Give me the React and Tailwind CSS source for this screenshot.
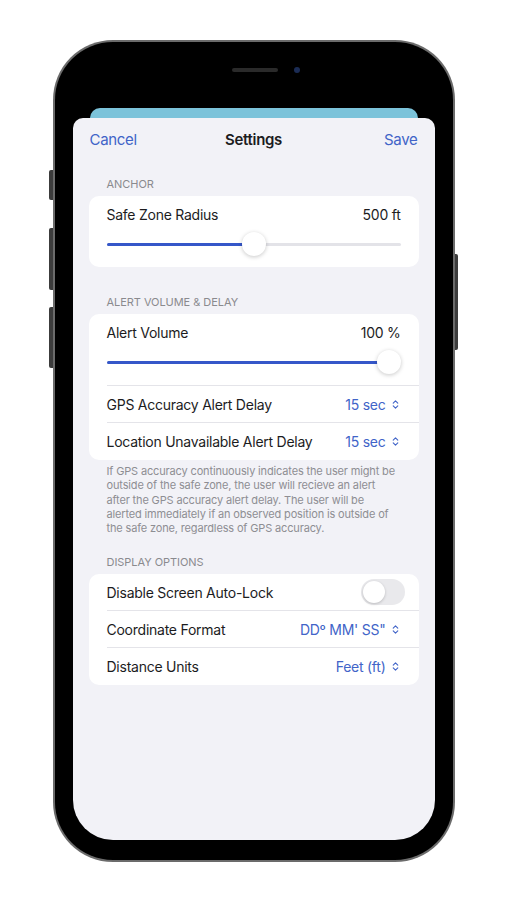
import { ChevronsUpDown } from "lucide-react";

const font = { fontFamily: "Inter, 'Noto Sans', 'Liberation Sans', sans-serif" };

const Header = ({ children, top }) => (
  <div className={`px-[34px] ${top} pb-[5px] text-[11px] leading-[13px] text-[#8a8a8e] uppercase tracking-[-0.05px]`}>
    {children}
  </div>
);

const Slider = ({ value }) => (
  <div className="relative h-[24px] mx-[18px] flex items-center">
    <div className="w-full h-[3px] rounded-full bg-[#e3e3e8] overflow-hidden">
      <div className="h-full bg-[#3557c9]" style={{ width: `calc(12px + (100% - 24px) * ${value})` }} />
    </div>
    <div
      className="absolute top-0 w-[24px] h-[24px] rounded-full bg-white shadow-[0_1px_4px_rgba(0,0,0,0.22)]"
      style={{ left: `calc((100% - 24px) * ${value})` }}
    />
  </div>
);

const PickerRow = ({ label, value, last }) => (
  <div className="ml-[18px] flex items-center">
    <div className={`flex-1 h-[37px] flex items-center justify-between pr-[18px] ${last ? "" : "border-b border-[#e4e4e9]"}`}>
      <span className="text-[14px] tracking-[-0.25px] text-[#1c1c1e]">{label}</span>
      <span className="flex items-center gap-[4px] text-[14px] tracking-[-0.25px] text-[#4164c8]">
        {value}
        <ChevronsUpDown size={11} strokeWidth={2.4} />
      </span>
    </div>
  </div>
);

export default function App() {
  return (
    <div className="w-[507px] h-[900px] bg-white pt-[40px] flex justify-center" style={font}>
      <div className="relative w-[402px] h-[822px]">
        {/* side buttons */}
        <div className="absolute left-[-4px] top-[130px] w-[4px] h-[30px] rounded-l-[2px] bg-[#3c3c3c]" />
        <div className="absolute left-[-4px] top-[188px] w-[4px] h-[62px] rounded-l-[2px] bg-[#3c3c3c]" />
        <div className="absolute left-[-4px] top-[267px] w-[4px] h-[61px] rounded-l-[2px] bg-[#3c3c3c]" />
        <div className="absolute right-[-3px] top-[214px] w-[3px] h-[96px] rounded-r-[2px] bg-[#3c3c3c]" />

        <div className="w-full h-full rounded-[60px] bg-[#6b6b6b] p-[2px]">
          <div className="relative w-full h-full rounded-[58px] bg-black p-[18px] pb-[20px]">
            {/* speaker + camera */}
            <div className="absolute top-[26px] left-[177px] w-[46px] h-[4px] rounded-full bg-[#2a2a2a]" />
            <div className="absolute top-[25px] left-[239px] w-[6px] h-[6px] rounded-full bg-[#1b2c55]" />

            <div className="w-full h-full rounded-[40px] bg-black overflow-hidden flex flex-col pt-[48px]">
              <div className="mx-[17px] h-[10px] rounded-t-[10px] bg-[#7cc3da]" />
              <div className="flex-1 bg-[#f2f2f7] rounded-t-[10px]">
                {/* nav */}
                <div className="h-[44px] px-[17px] flex items-center justify-between text-[15px] tracking-[-0.3px]">
                  <span className="text-[#4164c8] w-[60px]">Cancel</span>
                  <span className="font-semibold text-[#1c1c1e]">Settings</span>
                  <span className="text-[#4164c8] w-[60px] text-right">Save</span>
                </div>

                <Header top="pt-[16px]">Anchor</Header>
                <div className="mx-[16px] bg-white rounded-[10px] pb-[11px]">
                  <div className="h-[36px] px-[18px] flex items-center justify-between text-[14px] tracking-[-0.25px] text-[#1c1c1e]">
                    <span>Safe Zone Radius</span>
                    <span>500 ft</span>
                  </div>
                  <Slider value={0.5} />
                </div>

                <Header top="pt-[29px]">Alert Volume &amp; Delay</Header>
                <div className="mx-[16px] bg-white rounded-[10px]">
                  <div className="ml-[18px] border-b border-[#e4e4e9] pb-[11px]">
                    <div className="h-[36px] pr-[18px] flex items-center justify-between text-[14px] tracking-[-0.25px] text-[#1c1c1e]">
                      <span>Alert Volume</span>
                      <span>100 %</span>
                    </div>
                    <div className="-ml-[18px]">
                      <Slider value={1} />
                    </div>
                  </div>
                  <PickerRow label="GPS Accuracy Alert Delay" value="15 sec" />
                  <PickerRow label="Location Unavailable Alert Delay" value="15 sec" last />
                </div>
                <p className="px-[34px] pt-[4px] text-[11px] leading-[14.3px] tracking-[-0.15px] text-[#8e8e93]">
                  If GPS accuracy continuously indicates the user might be outside of the safe zone, the user will recieve an alert after the GPS accuracy alert delay. The user will be alerted immediately if an observed position is outside of the safe zone, regardless of GPS accuracy.
                </p>

                <Header top="pt-[21px]">Display Options</Header>
                <div className="mx-[16px] bg-white rounded-[10px]">
                  <div className="ml-[18px] flex items-center">
                    <div className="flex-1 h-[37px] flex items-center justify-between pr-[14px] border-b border-[#e4e4e9]">
                      <span className="text-[14px] tracking-[-0.25px] text-[#1c1c1e]">Disable Screen Auto-Lock</span>
                      <div className="w-[44px] h-[26px] rounded-full bg-[#e9e9ec] p-[2px]">
                        <div className="w-[22px] h-[22px] rounded-full bg-white shadow-[0_1px_3px_rgba(0,0,0,0.2)]" />
                      </div>
                    </div>
                  </div>
                  <PickerRow label="Coordinate Format" value={"DD\u00BA MM' SS\""} />
                  <PickerRow label="Distance Units" value="Feet (ft)" last />
                </div>
              </div>
            </div>
          </div>
        </div>
      </div>
    </div>
  );
}
